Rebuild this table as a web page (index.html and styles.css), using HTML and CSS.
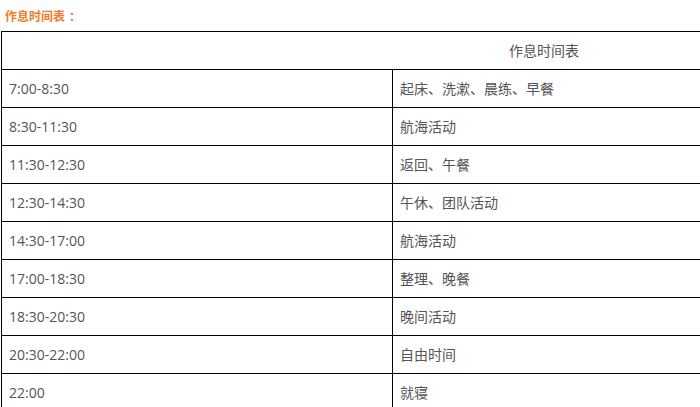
FILE: index.html
```html
<!DOCTYPE html>
<html lang="zh">
<head>
<meta charset="utf-8">
<link rel="stylesheet" href="styles.css">
</head>
<body>
<p class="title">作息时间表<span class="colon">：</span></p>
<table class="schedule">
  <colgroup><col class="col-time"><col class="col-act"></colgroup>
  <tr class="head"><td colspan="2">作息时间表</td></tr>
  <tr><td class="time">7:00-8:30</td><td class="act">起床、洗漱、晨练、早餐</td></tr>
  <tr><td class="time">8:30-11:30</td><td class="act">航海活动</td></tr>
  <tr><td class="time">11:30-12:30</td><td class="act">返回、午餐</td></tr>
  <tr><td class="time">12:30-14:30</td><td class="act">午休、团队活动</td></tr>
  <tr><td class="time">14:30-17:00</td><td class="act">航海活动</td></tr>
  <tr><td class="time">17:00-18:30</td><td class="act">整理、晚餐</td></tr>
  <tr><td class="time">18:30-20:30</td><td class="act">晚间活动</td></tr>
  <tr><td class="time">20:30-22:00</td><td class="act">自由时间</td></tr>
  <tr><td class="time">22:00</td><td class="act">就寝</td></tr>
</table>
</body>
</html>
```
FILE: styles.css
```css
html, body {
  margin: 0;
  padding: 0;
  overflow: hidden;
  background: #fff;
}
body {
  font-family: "Open Sans", "Noto Sans CJK SC", sans-serif;
  color: #555;
}
.title {
  margin: 0;
  padding: 6px 0 0 5px;
  height: 25px;
  box-sizing: border-box;
  font-size: 12px;
  line-height: 19px;
  font-weight: bold;
  color: #f07a2a;
  font-family: "Noto Sans CJK SC", sans-serif;
}
.title .colon {
  display: inline-block;
  margin-left: 4px;
}
.schedule {
  margin-left: 1px;
  margin-top: 6px;
  border-collapse: collapse;
  width: 1086px;
  table-layout: fixed;
}
.col-time {
  width: 391px;
}
.schedule td {
  border: 1px solid #000;
  height: 35px;
  padding: 1px 0 1px 7px;
  font-size: 14px;
  line-height: 20px;
  vertical-align: middle;
  color: #555;
}
.schedule .head td {
  text-align: center;
  padding: 0 0 2px 0;
  font-family: "Noto Sans CJK SC", sans-serif;
}
.schedule td.act {
  font-family: "Noto Sans CJK SC", sans-serif;
  padding-top: 0;
  padding-bottom: 2px;
}
```
